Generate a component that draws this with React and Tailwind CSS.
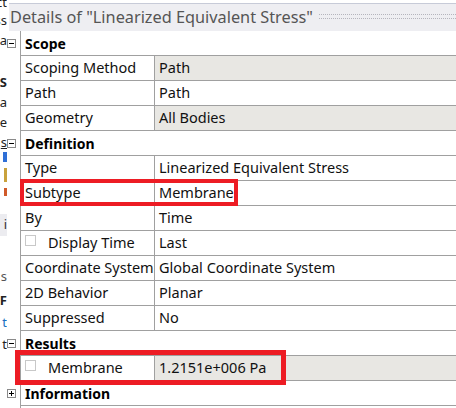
import React from 'react';

const rows = [
  { header: 'Scope', exp: '-' },
  { label: 'Scoping Method', value: 'Path', gray: true },
  { label: 'Path', value: 'Path' },
  { label: 'Geometry', value: 'All Bodies', gray: true },
  { header: 'Definition', exp: '-' },
  { label: 'Type', value: 'Linearized Equivalent Stress' },
  { label: 'Subtype', value: 'Membrane', mark: 'subtype' },
  { label: 'By', value: 'Time' },
  { label: 'Display Time', value: 'Last', check: true },
  { label: 'Coordinate System', value: 'Global Coordinate System' },
  { label: '2D Behavior', value: 'Planar' },
  { label: 'Suppressed', value: 'No' },
  { header: 'Results', exp: '-' },
  { label: 'Membrane', value: '1.2151e+006 Pa', gray: true, check: true, mark: 'result' },
  { header: 'Information', exp: '+' },
];

function Expander({ sign }) {
  return (
    <div className="w-[9px] h-[9px] border border-[#8a8a8a] bg-white flex items-center justify-center relative">
      <div className="w-[5px] h-[1px] bg-black" />
      {sign === '+' && <div className="absolute w-[1px] h-[5px] bg-black" />}
    </div>
  );
}

function Row({ row }) {
  if (row.header) {
    return (
      <div className="flex h-[25px]">
        <div className="w-[13px] flex items-center">
          <Expander sign={row.exp} />
        </div>
        <div className="flex-1 border-l border-b border-[#a0a0a0] bg-white pl-[4px] flex items-center font-bold text-[14px] text-black">
          {row.header}
        </div>
      </div>
    );
  }
  return (
    <div className="flex h-[25px]">
      <div className="w-[13px]" />
      <div className="flex-1 flex border-l border-b border-[#a0a0a0] relative">
        <div className="w-[134px] border-r border-[#a0a0a0] bg-white flex items-center pl-[4px] text-[#111] whitespace-nowrap">
          {row.check && <div className="w-[11px] h-[11px] border border-[#c8c8c8] bg-white mr-[12px] -mt-[6px] shrink-0" />}
          {row.label}
        </div>
        <div className={`flex-1 flex items-center pl-[4px] text-[#111] whitespace-nowrap ${row.gray ? 'bg-[#e8e7e3]' : 'bg-white'}`}>
          {row.value}
        </div>
        {row.mark === 'subtype' && (
          <div className="absolute -left-[1px] -top-[2px] w-[218px] h-[27px] border-4 border-[#ed1c24]" />
        )}
        {row.mark === 'result' && (
          <div className="absolute -left-[6px] -top-[6px] w-[271px] h-[35px] border-[5px] border-[#ed1c24]" />
        )}
      </div>
    </div>
  );
}

function Frag({ t, cls = '' }) {
  return <div className={`flex justify-end whitespace-nowrap overflow-hidden ${cls}`}>{t}</div>;
}

export default function App() {
  return (
    <div className="w-[456px] h-[408px] bg-white overflow-hidden flex text-[14.5px]" style={{ fontFamily: '"Noto Sans", "Open Sans", sans-serif' }}>
      <div className="w-[7px] flex flex-col overflow-hidden text-[13px] text-[#222] leading-[20px]">
        <Frag t="ct" cls="h-[10px] leading-[4px]" />
        <Frag t="ss" cls="h-[20px]" />
        <Frag t="Ma" cls="h-[20px]" />
        <div className="h-[22px]" />
        <Frag t="S" cls="h-[20px] font-bold" />
        <Frag t="a" cls="h-[20px]" />
        <Frag t="e" cls="h-[20px]" />
        <Frag t="s" cls="h-[18px] underline" />
        <div className="h-[10px] w-[4px] bg-[#2f6fd6] self-end mt-[2px]" />
        <div className="h-[14px] w-[3px] bg-[#c9a23c] self-end mt-[6px]" />
        <div className="h-[8px] w-[3px] bg-[#d05a2a] self-end mt-[6px]" />
        <Frag t="i" cls="h-[22px] mt-[18px] bg-[#ececf0] text-[#333]" />
        <Frag t="s" cls="h-[20px] mt-[30px] text-[#555]" />
        <Frag t="F" cls="h-[20px] mt-[4px] font-bold" />
        <Frag t="t" cls="h-[20px] mt-[2px] text-[#1a6fc0]" />
        <Frag t="t" cls="h-[20px] mt-[2px]" />
      </div>
      <div className="flex-1 flex flex-col">
        <div className="h-[4px] ml-[2px] bg-[#eeeef2] border-t border-[#c7cbd8] mt-[3px]" />
        <div className="h-[24px] ml-[2px] bg-[#eeeef2] flex items-center pl-[1px] text-[#555] text-[16.3px] whitespace-nowrap">
          <span className="-mt-[4px]">Details of "Linearized Equivalent Stress"</span>
          <div className="flex-1 ml-[6px] h-[5px] border-y border-dotted border-[#b5b5bd] -mt-[6px]" />
        </div>
        {rows.map((r, i) => (
          <Row key={i} row={r} />
        ))}
        <div className="flex h-[2px]">
          <div className="w-[13px]" />
          <div className="flex-1 border-l border-[#a0a0a0]" />
        </div>
      </div>
    </div>
  );
}
